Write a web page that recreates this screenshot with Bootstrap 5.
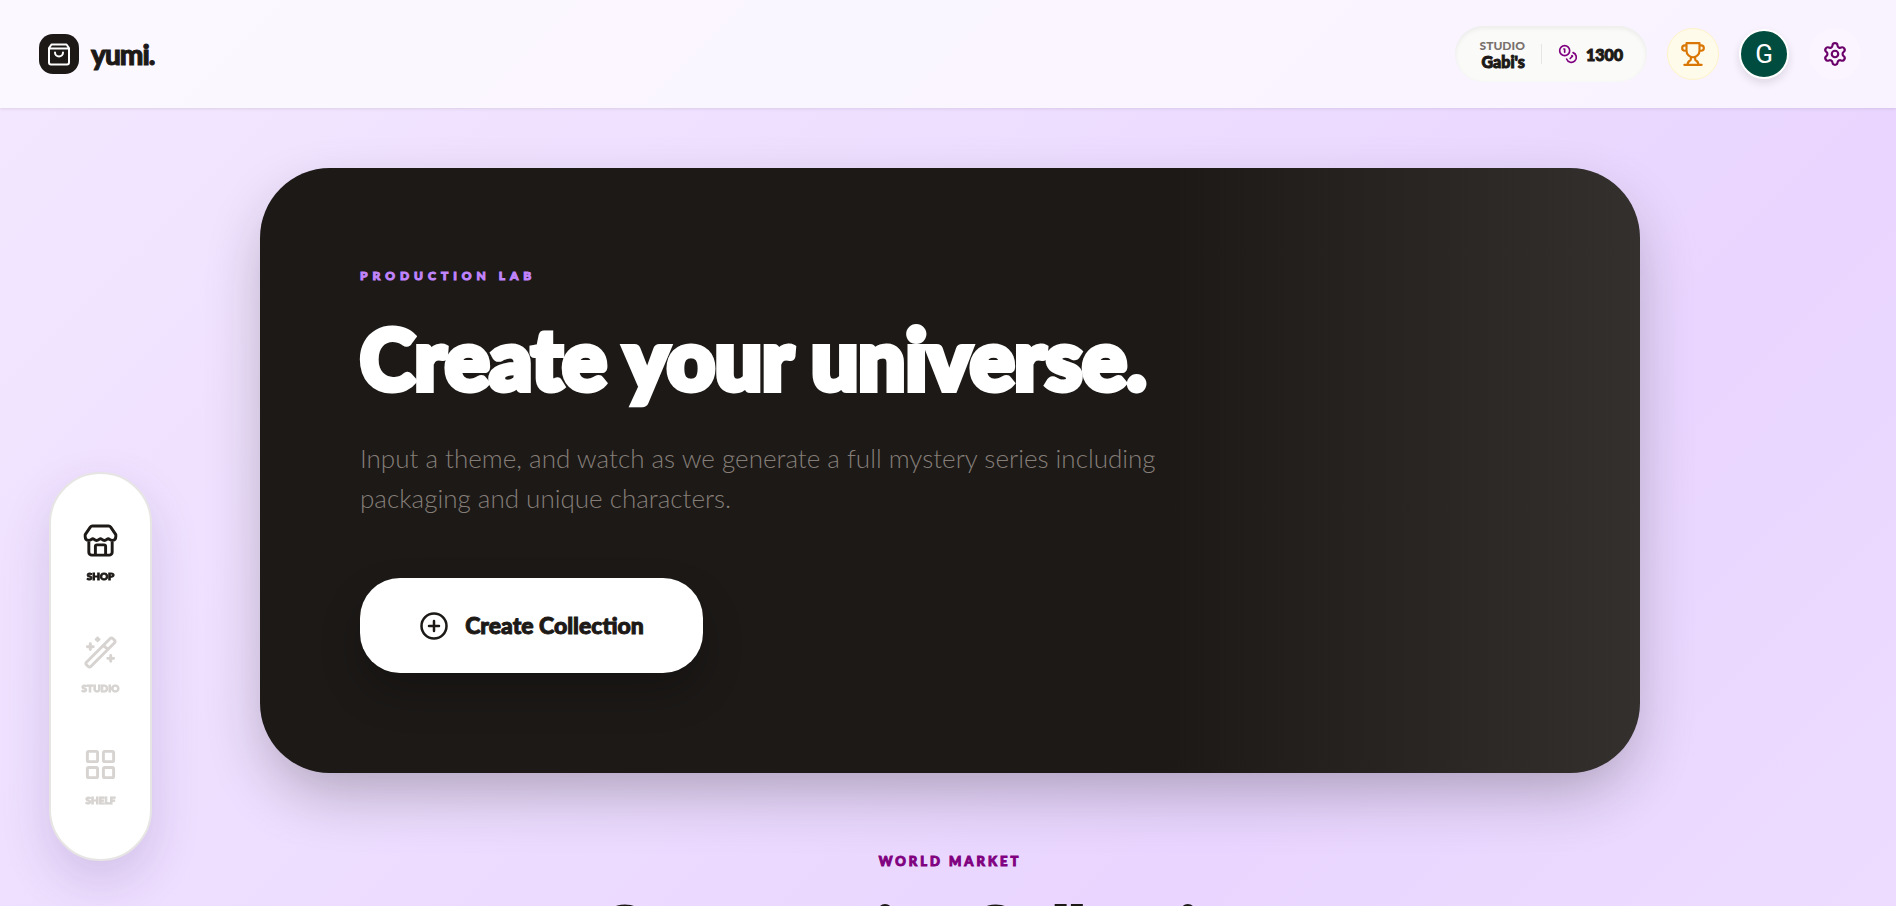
<!DOCTYPE html>
<html lang="en">
<head>
<meta charset="utf-8">
<meta name="viewport" content="width=device-width, initial-scale=1">
<title>yumi.</title>
<link href="https://cdn.jsdelivr.net/npm/bootstrap@5.3.0/dist/css/bootstrap.min.css" rel="stylesheet">
<style>
  :root { --ink: #1c1917; --plum: #800080; }
  body {
    font-family: Lato, "Open Sans", sans-serif;
    color: var(--ink);
    height: 100vh;
    overflow: hidden;
    background: #f3e8ff linear-gradient(135deg, #f3e8ff 0%, #e9d5ff 50%, #f3e8ff 100%) 0 0 / 100% 2200px no-repeat;
  }
  .heavy { font-weight: 900; -webkit-text-stroke: 1px currentColor; paint-order: stroke fill; stroke-linejoin: round; }
  .topbar { height: 108px; padding: 0 35px 0 39px; background: rgba(255,255,255,.7); box-shadow: 0 1px 3px rgba(28,25,23,.1); }
  .logo-tile { width: 40px; height: 40px; border-radius: 14px; background: var(--ink); }
  .brand-name { font-size: 28px; line-height: 38px; letter-spacing: -1px; }
  .tools { gap: 20px; }
  .stat-pill { height: 56px; padding: 0 24px 0 25px; border-radius: 28px; background: #fafaf9; box-shadow: inset 0 2px 5px rgba(28,25,23,.07); }
  .pill-label { font-size: 12px; line-height: 14px; color: #78716c; }
  .pill-value { font-size: 16px; line-height: 17px; color: var(--ink); }
  .pill-rule { width: 1px; height: 20px; background: #e7e5e4; }
  .round-btn { width: 52px; height: 52px; padding: 0; border-radius: 50%; }
  .trophy { background: #fffbeb; border: 1px solid #fef3c7; color: #d97706; }
  .gear { background: #faf5ff; color: #6b006b; border: 0; }
  .avatar { width: 50px; height: 50px; background: #004d40; border: 2px solid #fff; color: #fff; font: 26px/44px Roboto, sans-serif; box-shadow: 0 4px 8px rgba(28,25,23,.12); }
  .dock { position: fixed; left: 49px; bottom: 45px; width: 103px; padding: 23px 0 26px; border: 2px solid #e7e5e4; border-radius: 52px; background: #fff; box-shadow: 0 20px 50px rgba(60,30,110,.16); }
  .dock-link { height: 112px; gap: 11px; color: #d6d3d1; font-size: 10px; line-height: 14px; text-decoration: none; }
  .dock-link.current { color: var(--ink); }
  .pill-label { -webkit-text-stroke-width: 0; }
  .page { padding: 60px 16px 0 20px; }
  .hero { max-width: 1380px; padding: 100px; border-radius: 70px; color: #fff; background: linear-gradient(90deg, transparent 66%, rgba(72,69,66,.52) 100%), var(--ink); box-shadow: 0 25px 60px -8px rgba(28,25,23,.3); }
  .eyebrow { font-size: 12px; line-height: 16px; letter-spacing: 5px; }
  .hero .eyebrow { color: #c084fc; }
  .hero-title { margin: 29px 0 35px; font-size: 83px; line-height: 90px; -webkit-text-stroke-width: 6px; }
  .hero-text { max-width: 820px; margin: 0 0 60px; color: #857e78; font-size: 26px; line-height: 40px; font-weight: 300; }
  .create-btn { height: 95px; width: 343px; border: 0; border-radius: 40px; background: #fff; color: var(--ink); font-size: 23px; box-shadow: 0 20px 40px rgba(0,0,0,.22); }
  .market { padding-top: 80px; }
  .market .eyebrow { color: var(--plum); font-size: 13px; letter-spacing: 3px; }
  .market-title { font-size: 72px; line-height: 80px; margin: 22px 0 0; letter-spacing: -2px; -webkit-text-stroke-width: 2px; }
</style>
</head>
<body>
<svg class="d-none" xmlns="http://www.w3.org/2000/svg">
  <defs>
    <symbol id="bag" viewBox="0 0 24 24"><path d="M4.500 2.500h15L22 6v14.500a2 2 0 0 1-2 2H4a2 2 0 0 1-2-2V6zM2.500 6.500h19M16 10.500a4 4 0 0 1-8 0"/></symbol>
    <symbol id="coins" viewBox="0 0 24 24"><circle cx="8" cy="8" r="6"/><path d="M18.090 10.370A6 6 0 1 1 10.340 18M7 6h1v4M16.710 13.880l.7.710-2.820 2.820"/></symbol>
    <symbol id="cup" viewBox="0 0 24 24"><path d="M6 9H4.500a2.500 2.500 0 0 1 0-5H6M18 9h1.500a2.500 2.500 0 0 0 0-5H18M4 22h16M10 14.660V17c0 .55-.47.98-.97 1.210C7.850 18.750 7 20.240 7 22M14 14.660V17c0 .55.47.98.97 1.210C16.150 18.750 17 20.240 17 22M18 2H6v7a6 6 0 0 0 12 0V2Z"/></symbol>
    <symbol id="cog" viewBox="0 0 24 24"><path d="M9.671 4.136a2.340 2.340 0 0 1 4.659 0 2.340 2.340 0 0 0 3.319 1.915 2.340 2.340 0 0 1 2.330 4.033 2.340 2.340 0 0 0 0 3.831 2.340 2.340 0 0 1-2.330 4.033 2.340 2.340 0 0 0-3.319 1.915 2.340 2.340 0 0 1-4.659 0 2.340 2.340 0 0 0-3.320-1.915 2.340 2.340 0 0 1-2.330-4.033 2.340 2.340 0 0 0 0-3.831A2.340 2.340 0 0 1 6.350 6.051a2.340 2.340 0 0 0 3.319-1.915"/><circle cx="12" cy="12" r="3"/></symbol>
    <symbol id="store" viewBox="0 0 24 24"><path d="M1.500 8 5 2.800A2 2 0 0 1 6.500 2h11a2 2 0 0 1 1.500.8L22.500 8M4 12v8a2 2 0 0 0 2 2h12a2 2 0 0 0 2-2v-8M15.500 22v-6a1 1 0 0 0-1-1h-5a1 1 0 0 0-1 1v6M1.500 8v1.500c0 1.500 1 2.500 2.500 2.500 1.500 0 1.900-1.200 2.700-1.200s1.200 1.200 2.600 1.200 1.900-1.200 2.700-1.200 1.300 1.200 2.700 1.200 1.800-1.200 2.600-1.200 1.200 1.200 2.700 1.200c1.500 0 2.500-1 2.500-2.500V8"/></symbol>
    <symbol id="wand" viewBox="0 0 24 24"><path d="m21.640 3.640-1.280-1.280a1.210 1.210 0 0 0-1.720 0L2.360 18.640a1.210 1.210 0 0 0 0 1.720l1.280 1.280a1.200 1.200 0 0 0 1.720 0L21.640 5.360a1.200 1.200 0 0 0 0-1.720M14 7l3 3M5 6v4M19 14v4M10 2v2M7 8H3M21 16h-4M11 3H9"/></symbol>
    <symbol id="grid" viewBox="0 0 24 24"><rect x="3" y="3" width="7" height="7" rx="1"/><rect x="14" y="3" width="7" height="7" rx="1"/><rect x="14" y="14" width="7" height="7" rx="1"/><rect x="3" y="14" width="7" height="7" rx="1"/></symbol>
    <symbol id="plus" viewBox="0 0 24 24"><circle cx="12" cy="12" r="10"/><path d="M8 12h8M12 8v8"/></symbol>
  </defs>
</svg>

<header class="topbar d-flex align-items-center justify-content-between">
  <a href="#" class="d-flex align-items-center text-reset text-decoration-none">
    <span class="logo-tile d-flex align-items-center justify-content-center me-2 text-white"><svg width="24" height="24" fill="none" stroke="currentColor" stroke-width="2" stroke-linejoin="round" stroke-linecap="round"><use href="#bag"/></svg></span>
    <span class="brand-name heavy ms-1">yumi.</span>
  </a>
  <div class="tools d-flex align-items-center">
    <div class="stat-pill d-flex align-items-center">
      <div class="text-end heavy pill-label">STUDIO<div class="pill-value heavy">Gabi's</div></div>
      <div class="pill-rule mx-3"></div>
      <svg width="20" height="20" fill="none" stroke="#800080" stroke-width="2" stroke-linejoin="round" stroke-linecap="round"><use href="#coins"/></svg>
      <span class="pill-value heavy ms-2">1300</span>
    </div>
    <button type="button" aria-label="Achievements" class="round-btn trophy d-flex align-items-center justify-content-center"><svg width="26" height="26" fill="none" stroke="currentColor" stroke-width="2" stroke-linejoin="round" stroke-linecap="round"><use href="#cup"/></svg></button>
    <button type="button" class="round-btn avatar">G</button>
    <button type="button" aria-label="Settings" class="round-btn gear d-flex align-items-center justify-content-center"><svg width="26" height="26" fill="none" stroke="currentColor" stroke-width="2" stroke-linejoin="round" stroke-linecap="round"><use href="#cog"/></svg></button>
  </div>
</header>

<nav class="dock" aria-label="Main">
  <a href="#" class="dock-link current heavy d-flex flex-column align-items-center justify-content-center"><svg width="35" height="35" fill="none" stroke="currentColor" stroke-width="2" stroke-linejoin="round" stroke-linecap="round"><use href="#store"/></svg>SHOP</a>
  <a href="#" class="dock-link heavy d-flex flex-column align-items-center justify-content-center"><svg width="35" height="35" fill="none" stroke="currentColor" stroke-width="2" stroke-linejoin="round" stroke-linecap="round"><use href="#wand"/></svg>STUDIO</a>
  <a href="#" class="dock-link heavy d-flex flex-column align-items-center justify-content-center"><svg width="35" height="35" fill="none" stroke="currentColor" stroke-width="2" stroke-linejoin="round" stroke-linecap="round"><use href="#grid"/></svg>SHELF</a>
</nav>

<main class="page">
  <section class="hero mx-auto">
    <div class="eyebrow heavy">PRODUCTION LAB</div>
    <h1 class="hero-title heavy">Create your universe.</h1>
    <p class="hero-text">Input a theme, and watch as we generate a full mystery series including packaging and unique characters.</p>
    <button type="button" class="create-btn heavy d-flex align-items-center justify-content-center gap-3"><svg width="30" height="30" fill="none" stroke="currentColor" stroke-width="2" stroke-linejoin="round" stroke-linecap="round"><use href="#plus"/></svg>Create Collection</button>
  </section>
  <section class="market text-center">
    <div class="eyebrow heavy">WORLD MARKET</div>
    <h2 class="market-title heavy">Community Collections</h2>
  </section>
</main>
<script src="https://cdn.jsdelivr.net/npm/bootstrap@5.3.0/dist/js/bootstrap.bundle.min.js"></script>
</body>
</html>
